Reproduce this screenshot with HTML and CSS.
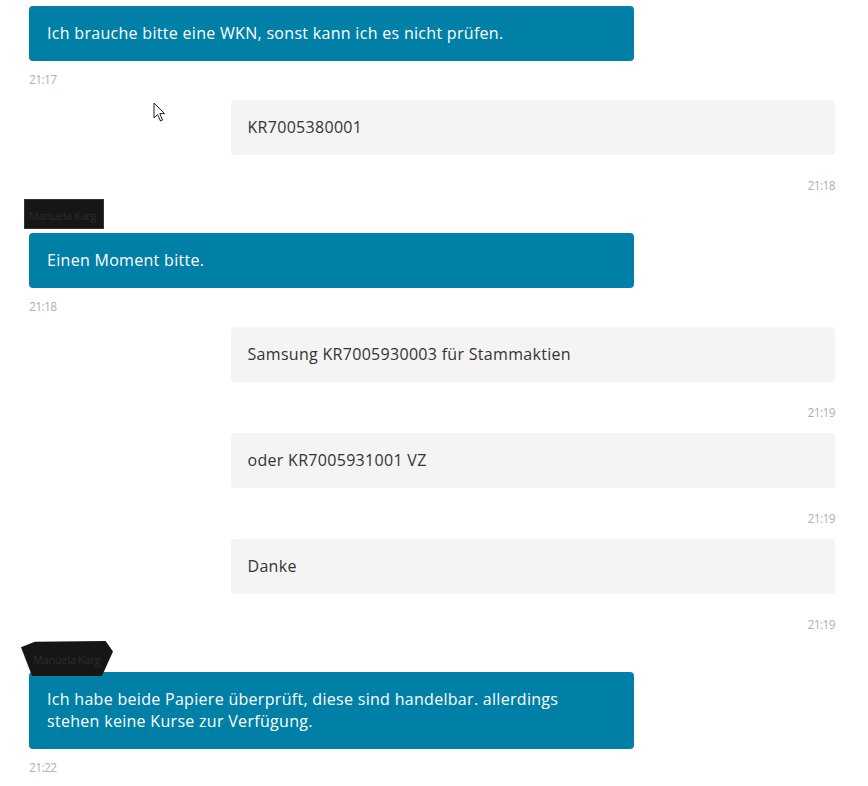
FILE: index.html
```html
<!DOCTYPE html>
<html lang="de">
<head>
<meta charset="utf-8">
<link rel="stylesheet" href="styles.css">
</head>
<body>
<div class="chat">
  <div class="msg agent">
    <div class="bubble">Ich brauche bitte eine WKN, sonst kann ich es nicht prüfen.</div>
    <div class="time">21:17</div>
  </div>
  <div class="msg user">
    <div class="bubble">KR7005380001</div>
    <div class="time">21:18</div>
  </div>
  <div class="name"><span class="redact r1">Manuela Karg</span></div>
  <div class="msg agent">
    <div class="bubble">Einen Moment bitte.</div>
    <div class="time">21:18</div>
  </div>
  <div class="msg user">
    <div class="bubble">Samsung KR7005930003 für Stammaktien</div>
    <div class="time">21:19</div>
  </div>
  <div class="msg user">
    <div class="bubble">oder KR7005931001 VZ</div>
    <div class="time">21:19</div>
  </div>
  <div class="msg user">
    <div class="bubble">Danke</div>
    <div class="time">21:19</div>
  </div>
  <div class="name"><span class="redact r2">Manuela Karg</span></div>
  <div class="msg agent">
    <div class="bubble">Ich habe beide Papiere überprüft, diese sind handelbar. allerdings stehen keine Kurse zur Verfügung.</div>
    <div class="time">21:22</div>
  </div>
  <svg class="cursor" width="14" height="22" viewBox="0 0 14 22"><path d="M1 1 L1 16 L4.5 12.5 L7.5 19 L9.5 18 L6.8 11.6 L11.5 11.6 Z" fill="#fff" stroke="#222" stroke-width="1" stroke-linejoin="miter"/></svg>
</div>
</body>
</html>
```
FILE: styles.css
```css
html, body {
  margin: 0;
  padding: 0;
  background: #fff;
}
body {
  font-family: "Open Sans", "Lato", sans-serif;
}
.chat {
  position: relative;
  padding: 6px 33px 0 29px;
  display: flex;
  flex-direction: column;
}
.msg {
  display: flex;
  flex-direction: column;
}
.bubble {
  width: 75%;
  box-sizing: border-box;
  border-radius: 4px;
  font-size: 16px;
  line-height: 22px;
  padding: 16px 40px 17px 18px;
  letter-spacing: 0.3px;
}
.agent .bubble {
  background: #0080a7;
  color: #fff;
}
.user {
  align-items: flex-end;
}
.user .bubble {
  background: #f4f4f4;
  color: #333;
  padding-left: 17px;
}
.time {
  font-size: 12px;
  line-height: 16px;
  color: #b0b0b0;
  margin-top: 11px;
  margin-bottom: 12px;
  letter-spacing: -0.6px;
}
.user .time {
  margin-top: 23px;
}
.name {
  height: 27px;
  position: relative;
}
.redact {
  position: absolute;
  font-size: 11px;
  line-height: 16px;
  color: #2c2c2c;
  background: #161616;
  white-space: nowrap;
  letter-spacing: -0.3px;
}
.r1 {
  left: -4px;
  top: -6px;
  width: 78px;
  height: 28px;
  padding: 8px 0 0 4px;
  box-sizing: border-box;
  box-shadow: 0 0 0 1px #333;
}
.r2 {
  left: -8px;
  top: -4px;
  width: 92px;
  height: 35px;
  padding: 11px 0 0 12px;
  box-sizing: border-box;
  clip-path: polygon(0 18%, 15% 2%, 92% 0, 100% 30%, 88% 100%, 12% 100%);
}
.cursor {
  position: absolute;
  left: 153px;
  top: 102px;
}
```
